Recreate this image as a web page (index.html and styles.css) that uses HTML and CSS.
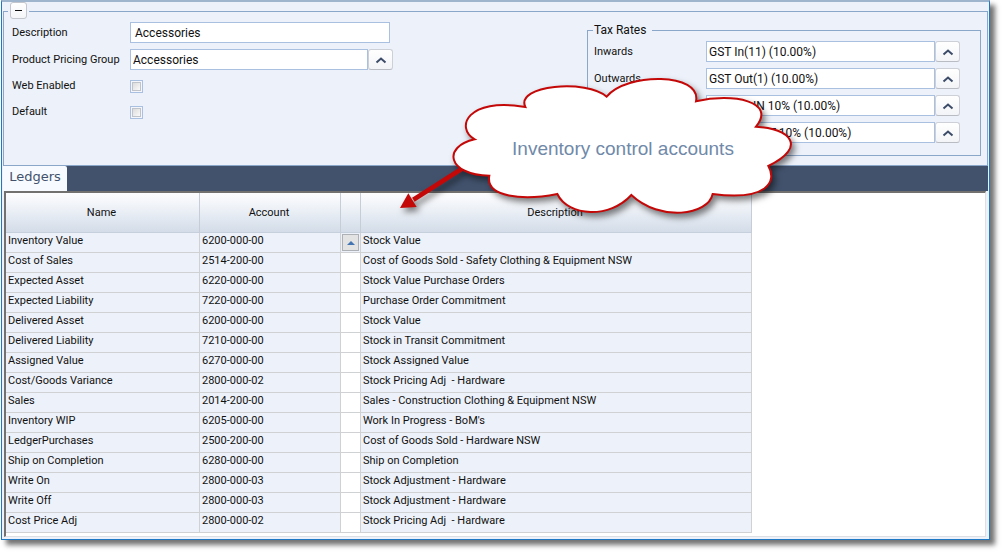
FILE: index.html
```html
<!DOCTYPE html>
<html lang="en">
<head>
<meta charset="utf-8">
<title>Product Group Ledgers</title>
<link rel="stylesheet" href="styles.css">
</head>
<body>
<main class="window">
  <fieldset class="details">
    <legend class="collapse-legend"><button class="collapse" type="button" aria-label="Collapse"></button></legend>
    <div class="details-body">
      <div class="form">
        <div class="row"><label for="desc">Description</label><input class="text wide" id="desc" type="text" value="Accessories"></div>
        <div class="row"><label for="group">Product Pricing Group</label><div class="combo main"><input class="text" id="group" type="text" value="Accessories"><button class="lookup" type="button" aria-label="Choose pricing group"><svg viewBox="0 0 12 8"><path d="M1.500 6.500 6 2.500l4.500 4"/></svg></button></div></div>
        <div class="row check-row"><label for="web">Web Enabled</label><input class="check" id="web" type="checkbox"></div>
        <div class="row check-row"><label for="def">Default</label><input class="check" id="def" type="checkbox"></div>
      </div>
      <fieldset class="taxes">
        <legend>Tax Rates</legend>
        <div class="row"><label for="t1">Inwards</label><div class="combo"><input class="text" id="t1" type="text" value="GST In(11) (10.00%)"><button class="lookup" type="button" aria-label="Choose inwards rate"><svg viewBox="0 0 12 8"><path d="M1.500 6.500 6 2.500l4.500 4"/></svg></button></div></div>
        <div class="row"><label for="t2">Outwards</label><div class="combo"><input class="text" id="t2" type="text" value="GST Out(1) (10.00%)"><button class="lookup" type="button" aria-label="Choose outwards rate"><svg viewBox="0 0 12 8"><path d="M1.500 6.500 6 2.500l4.500 4"/></svg></button></div></div>
        <div class="row"><span></span><div class="combo"><input class="text" type="text" aria-label="Inwards rate 2" value="GST NZ IN 10% (10.00%)"><button class="lookup" type="button" aria-label="Choose second inwards rate"><svg viewBox="0 0 12 8"><path d="M1.500 6.500 6 2.500l4.500 4"/></svg></button></div></div>
        <div class="row"><span></span><div class="combo"><input class="text" type="text" aria-label="Outwards rate 2" value="GST NZ OUT 10% (10.00%)"><button class="lookup" type="button" aria-label="Choose second outwards rate"><svg viewBox="0 0 12 8"><path d="M1.500 6.500 6 2.500l4.500 4"/></svg></button></div></div>
      </fieldset>
    </div>
  </fieldset>

  <nav class="tabs"><button class="tab" type="button">Ledgers</button></nav>

  <section class="grid">
    <table>
      <colgroup><col class="c-name"><col class="c-account"><col class="c-pick"><col class="c-desc"></colgroup>
      <thead><tr><th>Name</th><th>Account</th><th></th><th>Description</th></tr></thead>
      <tbody>
        <tr><td>Inventory Value</td><td>6200-000-00</td><td class="pick current"><button class="picker" type="button" aria-label="Choose account"></button></td><td>Stock Value</td></tr>
        <tr><td>Cost of Sales</td><td>2514-200-00</td><td class="pick"></td><td>Cost of Goods Sold - Safety Clothing &amp; Equipment NSW</td></tr>
        <tr><td>Expected Asset</td><td>6220-000-00</td><td class="pick"></td><td>Stock Value Purchase Orders</td></tr>
        <tr><td>Expected Liability</td><td>7220-000-00</td><td class="pick"></td><td>Purchase Order Commitment</td></tr>
        <tr><td>Delivered Asset</td><td>6200-000-00</td><td class="pick"></td><td>Stock Value</td></tr>
        <tr><td>Delivered Liability</td><td>7210-000-00</td><td class="pick"></td><td>Stock in Transit Commitment</td></tr>
        <tr><td>Assigned Value</td><td>6270-000-00</td><td class="pick"></td><td>Stock Assigned Value</td></tr>
        <tr><td>Cost/Goods Variance</td><td>2800-000-02</td><td class="pick"></td><td>Stock Pricing Adj  - Hardware</td></tr>
        <tr><td>Sales</td><td>2014-200-00</td><td class="pick"></td><td>Sales - Construction Clothing &amp; Equipment NSW</td></tr>
        <tr><td>Inventory WIP</td><td>6205-000-00</td><td class="pick"></td><td>Work In Progress - BoM's</td></tr>
        <tr><td>LedgerPurchases</td><td>2500-200-00</td><td class="pick"></td><td>Cost of Goods Sold - Hardware NSW</td></tr>
        <tr><td>Ship on Completion</td><td>6280-000-00</td><td class="pick"></td><td>Ship on Completion</td></tr>
        <tr><td>Write On</td><td>2800-000-03</td><td class="pick"></td><td>Stock Adjustment - Hardware</td></tr>
        <tr><td>Write Off</td><td>2800-000-03</td><td class="pick"></td><td>Stock Adjustment - Hardware</td></tr>
        <tr><td>Cost Price Adj</td><td>2800-000-02</td><td class="pick"></td><td>Stock Pricing Adj  - Hardware</td></tr>
      </tbody>
    </table>
  </section>

  <aside class="callout">
    <svg viewBox="-150 0 1290 510" aria-hidden="true">
      <path class="arrow-shaft" d="M75 320-80 419"/>
      <path class="arrow-head" d="M-120 444-95 400-70 441Z"/>
      <path class="cloud" d="M500 110C560 37 785 37 768 124C880 98 1010 125 948 200C1050 205 1104 260 985 318C1012 365 982 423 818 402C805 466 660 486 574 405C510 476 385 471 352 402C250 422 135 412 148 347C22 345 6 260 104 238C45 205 80 110 256 141C225 75 440 57 500 110Z"/>
    </svg>
    <p>Inventory control accounts</p>
  </aside>
</main>
</body>
</html>
```
FILE: styles.css
```css
* { box-sizing: border-box; }

body {
  margin: 0;
  padding-bottom: 15px;
  background: #fff;
  color: #111;
  font-family: Roboto, "Liberation Sans", sans-serif;
  font-size: 11px;
  line-height: 14px;
}

button, input { font: inherit; color: inherit; margin: 0; padding: 0; }

.window {
  position: relative;
  margin: 0 15px 0 1px;
  padding: 0 1px 2px;
  background: #edf1f9;
  border: 1px solid #1f78c4;
  border-top: 2px solid #9fb4cd;
  box-shadow: 5px 5px 5px rgba(0, 0, 0, 0.55);
}

.details {
  margin: 0;
  padding: 2px 6px 9px 8px;
  border: 1px solid #8aa6c9;
  min-width: 0;
}

.collapse-legend { padding: 0 2px; margin-left: -4px; height: 18px; }

.collapse {
  display: flex;
  align-items: center;
  justify-content: center;
  width: 17px;
  height: 17px;
  background: linear-gradient(#fff, #f4f5f8);
  border: 1px solid #c3c6cc;
  border-radius: 3px;
}

.collapse::before { content: ""; width: 7px; height: 1px; background: #111; }

.details-body { display: flex; justify-content: space-between; align-items: flex-start; }

.form { display: grid; gap: 6px; }

.row { display: grid; grid-template-columns: 118px auto; align-items: center; justify-content: start; min-height: 21px; }

.check-row { min-height: 20px; }

.text {
  height: 21px;
  min-width: 0;
  padding: 0 3px;
  background: #fff;
  border: 1px solid #a9c0e0;
  border-radius: 0;
  outline: 0;
  font-size: 12px;
}

.wide { width: 260px; padding-left: 4px; }

.combo { display: flex; width: 254px; }
.combo.main { width: 263px; }
.combo .text { flex: 1; padding-left: 2px; }

.lookup {
  display: flex;
  align-items: center;
  justify-content: center;
  width: 25px;
  height: 21px;
  background: linear-gradient(#fff, #f3f4f7);
  border: 1px solid #cdd0d7;
  border-bottom-color: #b9bcc3;
  border-radius: 3px;
}

.lookup svg { width: 12px; height: 8px; fill: none; stroke: #3c4c68; stroke-width: 2; }

.check {
  appearance: none;
  width: 13px;
  height: 13px;
  background: linear-gradient(135deg, #dcdcdc, #fafafa) content-box, #f4f6fb;
  padding: 2px;
  border: 1px solid #a9c0e0;
  box-shadow: inset 0 0 0 1px #f4f6fb, inset 0 0 0 2px #bfc3ca;
}

.taxes {
  margin: 1px 0 0;
  padding: 4px 20px 12px 6px;
  border: 1px solid #8aa6c9;
  min-width: 0;
}

.taxes legend { padding: 0 6px 0 1px; margin-left: -1px; font-size: 12px; }
.taxes .row { grid-template-columns: 112px auto; margin-bottom: 6px; }
.taxes .row:last-child { margin-bottom: 0; }

.tabs { display: flex; height: 25px; background: #42526c; }

.tab {
  width: 64px;
  padding-bottom: 3px;
  background: #f7fbff;
  border: 0;
  border-radius: 0 2px 0 0;
  color: #42526c;
  font-family: "DejaVu Sans", Verdana, sans-serif;
  font-size: 13px;
}

.grid {
  margin: 0 2px 0 1px;
  padding-bottom: 3px;
  background: #fff;
  border: 1px solid #dcdfe3;
  border-top: 2px solid #73716f;
  border-left: 2px solid #73716f;
}

table { width: 746px; border-collapse: separate; border-spacing: 0; table-layout: fixed; }

.c-name { width: 194px; }
.c-account { width: 141px; }
.c-pick { width: 20px; }
.c-desc { width: 391px; }

th {
  height: 40px;
  padding: 1px 3px 0 1px;
  background: linear-gradient(#fdfdfe, #e9eef5 50%, #d3dce8);
  border-right: 1px solid #c6cdd6;
  border-bottom: 1px solid #c6d0dd;
  font-weight: 400;
}

td {
  height: 20px;
  padding: 0 2px 4px;
  background: #edf1f9;
  border-right: 1px solid #cfd1d3;
  border-bottom: 1px solid #cfd1d3;
  white-space: pre;
}

.pick { padding: 0; background: #fff; }
.current { background: #edf1f9; }

.picker {
  display: flex;
  align-items: center;
  justify-content: center;
  width: 17px;
  height: 17px;
  margin: 1px;
  background: #e3e3e3;
  border: 1px solid #adb0b4;
}

.picker::before { content: ""; border: 4px solid transparent; border-top: 0; border-bottom-color: #4574b3; }

.callout { position: absolute; left: 388px; top: 58px; width: 430px; }

.callout svg { display: block; width: 100%; filter: drop-shadow(3px 4px 3px rgba(0, 0, 0, 0.5)); }

.cloud { fill: #fff; stroke: #c40808; stroke-width: 6; }
.arrow-shaft { fill: none; stroke: #c40808; stroke-width: 14; }
.arrow-head { fill: #c40808; }

.callout p {
  position: absolute;
  left: 50px;
  right: 0;
  top: 78px;
  margin: 0;
  padding-right: 14px;
  color: #7089a9;
  font-family: "Liberation Sans", Arial, sans-serif;
  font-size: 19px;
  line-height: 22px;
  text-align: center;
}
```
